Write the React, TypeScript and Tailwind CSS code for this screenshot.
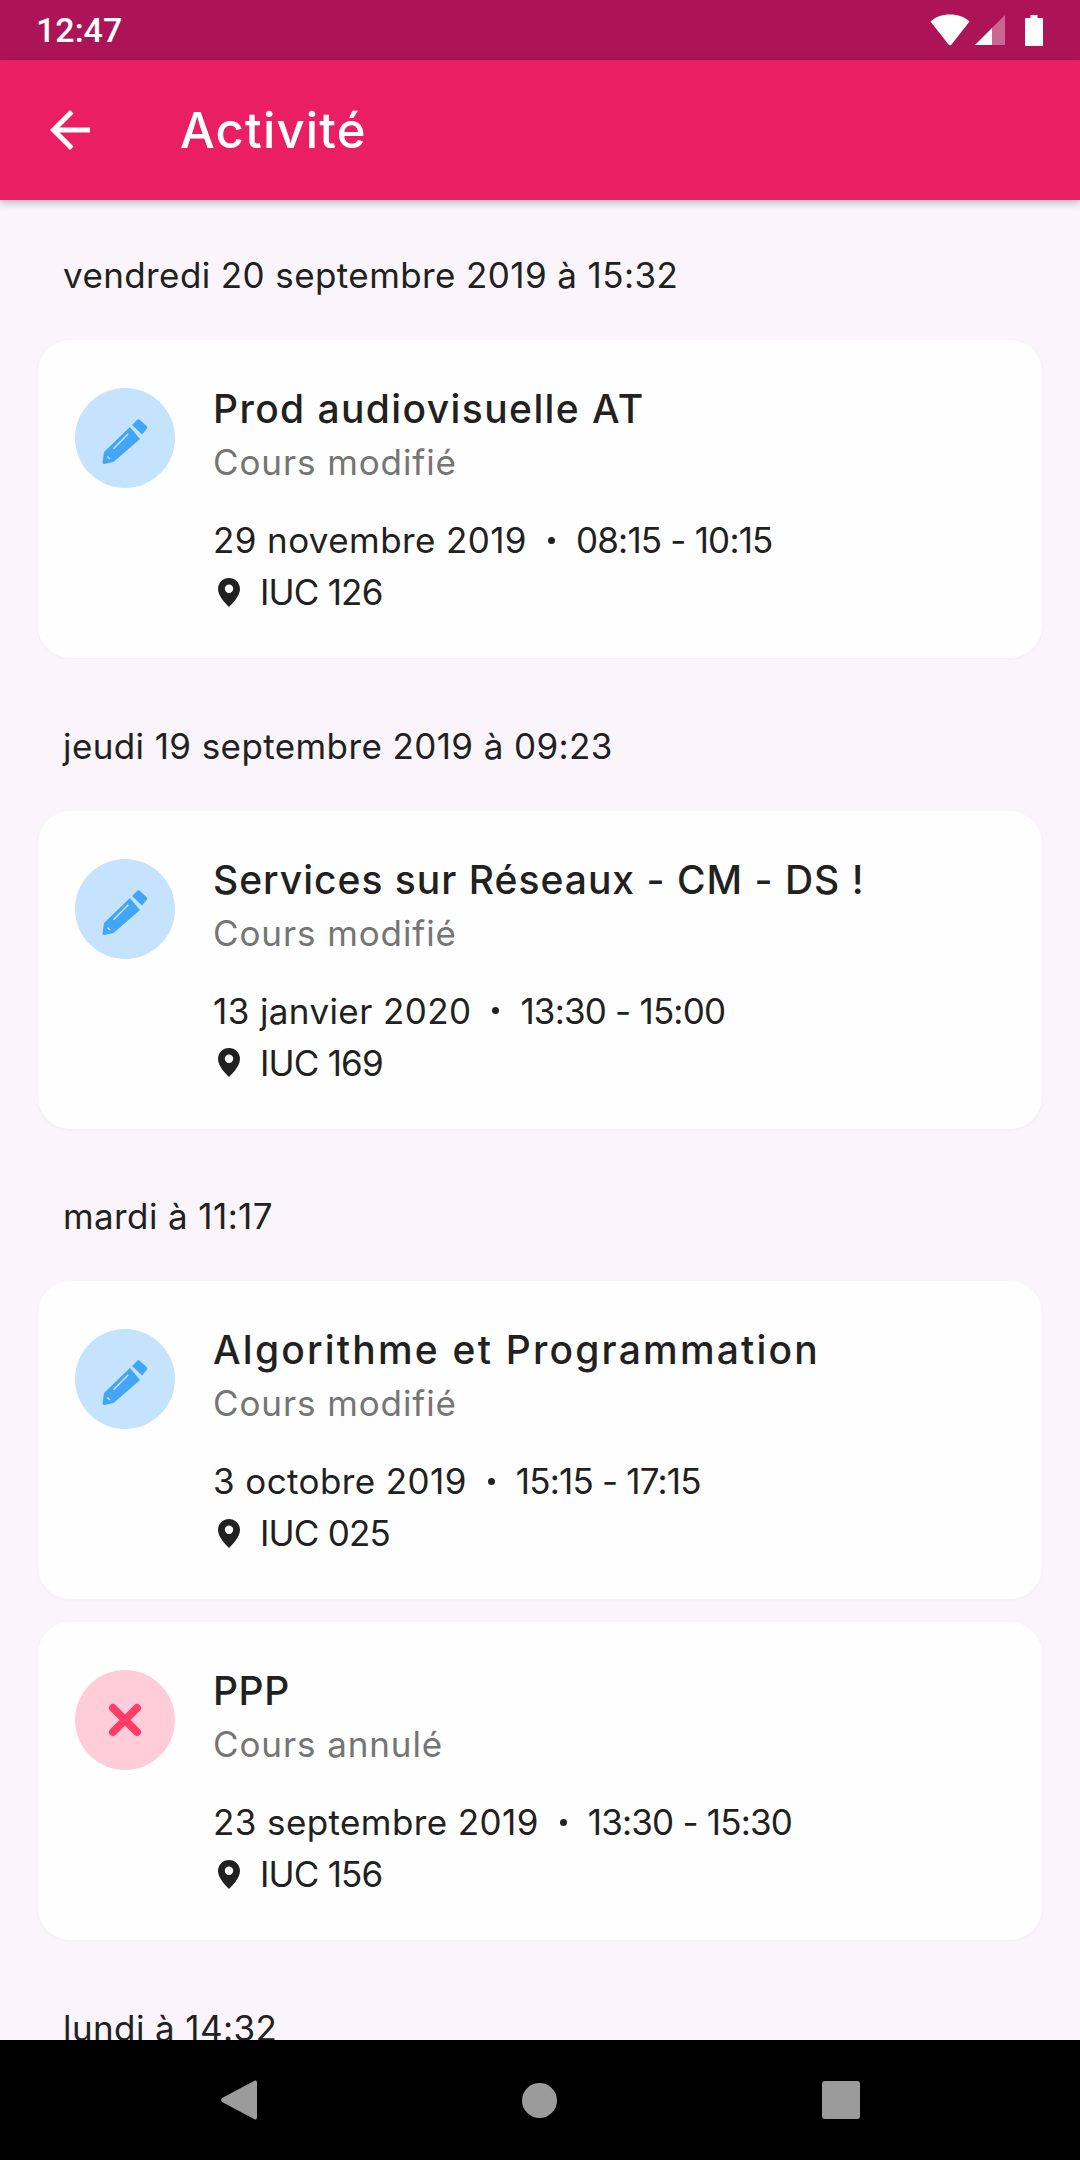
const groups = [
  {
    date: "vendredi 20 septembre 2019 à 15:32",
    items: [
      { title: "Prod audiovisuelle AT", titleClass: "tracking-[1.4px]", status: "Cours modifié", when: "29 novembre 2019", time: "08:15 - 10:15", room: "IUC 126", cancelled: false },
    ],
  },
  {
    date: "jeudi 19 septembre 2019 à 09:23",
    items: [
      { title: "Services sur Réseaux - CM - DS !", titleClass: "tracking-[1px]", status: "Cours modifié", when: "13 janvier 2020", time: "13:30 - 15:00", room: "IUC 169", cancelled: false },
    ],
  },
  {
    date: "mardi à 11:17",
    items: [
      { title: "Algorithme et Programmation", titleClass: "tracking-[2.2px]", status: "Cours modifié", when: "3 octobre 2019", time: "15:15 - 17:15", room: "IUC 025", cancelled: false },
      { title: "PPP", titleClass: "tracking-[0.6px]", status: "Cours annulé", when: "23 septembre 2019", time: "13:30 - 15:30", room: "IUC 156", cancelled: true },
    ],
  },
  { date: "lundi à 14:32", items: [] },
]

function StatusBar() {
  return (
    <div className="flex h-[60px] shrink-0 items-center justify-between bg-[#ad1457] pl-[36px] pr-[37px] text-white">
      <span className="font-['Roboto',sans-serif] text-[34px] font-medium leading-none">12:47</span>
      <div className="flex items-center">
        <svg width="40" height="32" viewBox="0 0 40 32" fill="white">
          <path d="M0.5 7.5C5.5 3 12 0.5 20 0.5s14.5 2.5 19.5 7L21.5 30.5c-.8 1-2.2 1-3 0z" />
        </svg>
        <svg width="30" height="30" viewBox="0 0 30 30" className="ml-[5px]">
          <path d="M0 30 L17 13 V30 Z" fill="white" />
          <path d="M17 13 L30 0 V30 H17 Z" fill="white" fillOpacity="0.35" />
        </svg>
        <svg width="18" height="31" viewBox="0 0 18 31" fill="white" className="ml-[20px]">
          <path d="M5.5 0h7v3H17a1 1 0 0 1 1 1v26a1 1 0 0 1-1 1H1a1 1 0 0 1-1-1V4a1 1 0 0 1 1-1h4.5z" />
        </svg>
      </div>
    </div>
  )
}

function AppBar() {
  return (
    <div className="relative z-10 flex h-[140px] shrink-0 items-center bg-[#e91e63] pl-[40px] shadow-[0_3px_8px_rgba(0,0,0,0.25)]">
      <svg width="60" height="60" viewBox="0 0 24 24" fill="white">
        <path d="M20 11H7.83l5.59-5.59L12 4l-8 8 8 8 1.41-1.41L7.83 13H20v-2z" />
      </svg>
      <h1 className="ml-[80px] font-['Inter',sans-serif] text-[49px] font-medium leading-none tracking-[1.2px] text-white">Activité</h1>
    </div>
  )
}

function PencilIcon() {
  return (
    <svg width="52" height="52" viewBox="0 0 52 52">
      <path d="M5 40 L31 15 L41 27 L14.5 50 L5 52 Q3.2 52 3.6 50 Z" fill="#42a5f5" />
      <path d="M33 13 L38 8 Q39.5 6.6 41 8 L47.5 14 Q49 15.5 47.6 17 L43 22.5 Z" fill="#42a5f5" />
      <path d="M14.5 36.8 L29.3 21.8" stroke="#c5e3fd" strokeWidth="1.6" />
      <path d="M8.4 44.5 L11 47" stroke="#c5e3fd" strokeWidth="1.6" />
    </svg>
  )
}

function CrossIcon() {
  return (
    <svg width="34" height="34" viewBox="0 0 34 34" stroke="#ff3d67" strokeWidth="8" strokeLinecap="round">
      <path d="M5 5 L29 29 M29 5 L5 29" />
    </svg>
  )
}

function PinIcon() {
  return (
    <svg width="22" height="29" viewBox="0 0 22 29" fill="#212121" fillRule="evenodd">
      <path d="M11 0C4.9 0 0 4.9 0 11c0 7.5 8.7 15.5 11 18 2.3-2.5 11-10.5 11-18C22 4.9 17.1 0 11 0zm0 15a4.2 4.2 0 1 1 0-8.400a4.2 4.2 0 0 1 0 8.400z" />
    </svg>
  )
}

type Item = (typeof groups)[number]["items"][number]

function ActivityCard({ item }: { item: Item }) {
  return (
    <div className="flex h-[318px] rounded-[32px] bg-[#fefefe] pl-[37px] pt-[42px] shadow-[0_1px_3px_rgba(120,90,120,0.05)]">
      <div
        className={`mt-[6px] flex h-[100px] w-[100px] shrink-0 items-center justify-center rounded-full ${
          item.cancelled ? "bg-[#ffcdd9]" : "bg-[#c5e3fd]"
        }`}
      >
        {item.cancelled ? <CrossIcon /> : <PencilIcon />}
      </div>
      <div className="ml-[38px] min-w-0">
        <div className={`text-[39px] font-medium leading-[54px] text-[#212121] ${item.titleClass}`}>{item.title}</div>
        <div className="-mt-[1px] text-[35px] leading-[54px] tracking-[0.9px] text-[#757575]">{item.status}</div>
        <div className="mt-[25px] flex items-center text-[35px] leading-[52px] text-[#212121]">
          <span className="tracking-[0.4px]">{item.when}</span>
          <span className="mx-[21px] h-[7px] w-[7px] rounded-full bg-[#212121]" />
          <span className="tracking-[-0.8px]">{item.time}</span>
        </div>
        <div className="flex items-center text-[35px] leading-[52px] text-[#212121]">
          <span className="ml-[5px] flex w-[22px] justify-center">
            <PinIcon />
          </span>
          <span className="ml-[20px] tracking-[-0.8px]">{item.room}</span>
        </div>
      </div>
    </div>
  )
}

export default function App() {
  return (
    <div className="flex h-[2160px] w-[1080px] flex-col overflow-hidden bg-[#f9f5fa] font-['Inter',sans-serif]">
      <StatusBar />
      <AppBar />

      <main className="min-h-0 flex-1 overflow-hidden px-[38px] pt-[51px]">
        <div className="flex flex-col gap-[63.5px]">
          {groups.map((group) => (
            <section key={group.date}>
              <div className="mb-[41px] pl-[25px] text-[35px] leading-[48px] tracking-[0.4px] text-[#212121]">{group.date}</div>
              <div className="flex flex-col gap-[23px]">
                {group.items.map((item) => (
                  <ActivityCard key={item.title} item={item} />
                ))}
              </div>
            </section>
          ))}
        </div>
      </main>

      <nav className="flex h-[120px] shrink-0 items-center justify-center gap-[265px] bg-black">
        <svg width="36" height="40" viewBox="0 0 36 40" fill="#9b9b9b">
          <path d="M34 0.500Q36 0 36 2.500V37.500Q36 40 34 39.500L1 22Q-1 20 1 18Z" />
        </svg>
        <div className="h-[35px] w-[35px] rounded-full bg-[#9b9b9b]" />
        <div className="h-[38px] w-[38px] rounded-[3px] bg-[#9b9b9b]" />
      </nav>
    </div>
  )
}
